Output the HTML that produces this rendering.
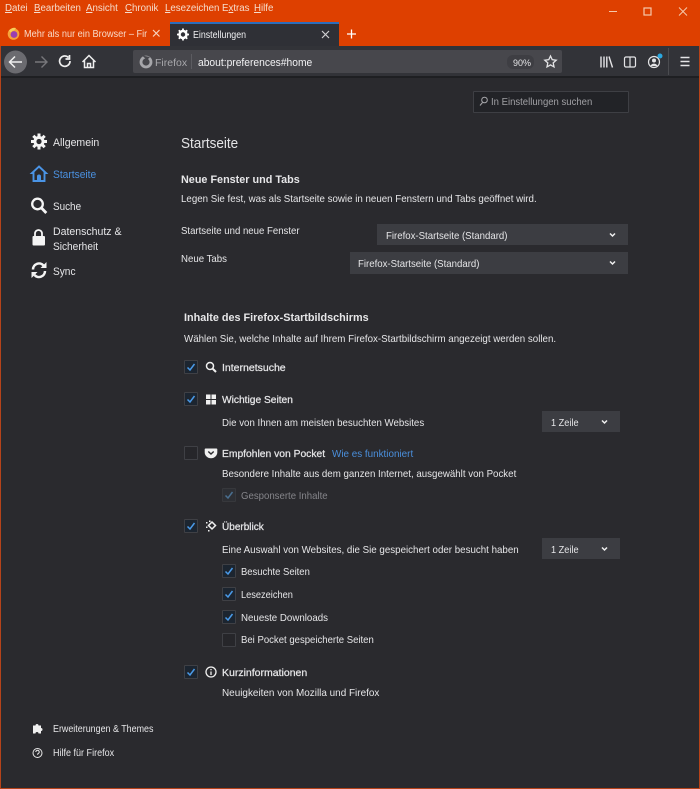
<!DOCTYPE html>
<html lang="de"><head><meta charset="utf-8"><title>Einstellungen</title>
<style>
html,body{margin:0;padding:0;width:700px;height:789px;overflow:hidden;background:#2a2a2e}
body{position:relative;font-family:"Liberation Sans",sans-serif;font-size:10.5px;color:#e6e6e8}
.t{position:absolute;white-space:nowrap;line-height:14px;transform-origin:0 0}
.b{font-weight:bold}
.m{-webkit-text-stroke:.25px #e6e6e8}
.box{position:absolute;background:#4a4a4f}
.cb{position:absolute;width:12px;height:12px;background:#1c2530;border:1px solid #3f4045;border-radius:1px}
.cb svg{position:absolute;left:0;top:0}
svg{position:absolute;overflow:visible}
u{text-decoration:underline}
.mn{top:2px;color:#f6dccb;font-size:9.7px}
</style></head><body>
<!-- title / tab bars -->
<div class="box" style="left:0;top:0;width:700px;height:46px;background:#de4000"></div>
<div class="t mn" style="left:5px"><u>D</u>atei</div>
<div class="t mn" style="left:34px"><u>B</u>earbeiten</div>
<div class="t mn" style="left:86px"><u>A</u>nsicht</div>
<div class="t mn" style="left:125px"><u>C</u>hronik</div>
<div class="t mn" style="left:165px"><u>L</u>esezeichen</div>
<div class="t mn" style="left:222px">E<u>x</u>tras</div>
<div class="t mn" style="left:254px"><u>H</u>ilfe</div>
<svg style="left:0;top:0" width="700" height="46" fill="none" stroke="#f5c9ac" stroke-width="1">
<path d="M609 11.500h8"/><rect x="644" y="8" width="7" height="7" stroke-width="1.200"/><path d="M679 7.500l8 8m0-8l-8 8"/>
<path d="M347 34h9M351.500 29.500v9" stroke="#fff" stroke-width="1.300"/>
<path d="M153 30l6.500 6.500m0-6.500l-6.500 6.500" stroke="#f7d4bf" stroke-width="1.200"/>
<circle cx="13.500" cy="34" r="5.800" fill="#f7a23a" stroke="none"/>
<circle cx="14" cy="34.500" r="3.400" fill="#9a3fb0" stroke="none"/>
<path d="M9 31a5.800 5.800 0 0 1 7-3l-2 2.500a3.500 3.500 0 0 0-3 2z" fill="#f5d05a" stroke="none"/>
</svg>
<div class="t" style="left:24px;top:28px;width:134px;overflow:hidden;color:#f8d9c7;font-size:10px;transform:scaleX(.92)">Mehr als nur ein Browser – Firefox</div>
<!-- active tab -->
<div class="box" style="left:170px;top:22px;width:169px;height:24px;background:#2f3036;border-top:2px solid #2b6dbb;box-sizing:border-box"></div>
<div class="t" style="left:193px;top:29px;color:#f0f0f2;font-size:10px;transform:scaleX(.883)">Einstellungen</div>
<svg style="left:0;top:0" width="700" height="46">
<path d="M322 31l7 7m0-7l-7 7" stroke="#cfcfd2" stroke-width="1.200" fill="none"/>
<g transform="translate(183 34.500)"><circle r="3.600" fill="none" stroke="#fff" stroke-width="2.200"/><path d="M0-6v12M-6 0h12M-4.200-4.200l8.400 8.400M4.200-4.200l-8.400 8.400" stroke="#fff" stroke-width="1.800"/><circle r="2.200" fill="#2f3036"/></g>
</svg>
<!-- toolbar -->
<div class="box" style="left:0;top:46px;width:700px;height:31px;background:#323338"></div>
<div class="box" style="left:0;top:76px;width:700px;height:2px;background:#1e1f22"></div>
<div class="box" style="left:133px;top:50px;width:429px;height:23px;background:#47474c;border-radius:2px"></div>
<div class="box" style="left:191px;top:54px;width:1px;height:15px;background:#5c5c61"></div>
<div class="box" style="left:507px;top:55px;width:27px;height:14px;background:#3e3e43;border-radius:6px"></div>
<div class="box" style="left:668px;top:48px;width:1px;height:27px;background:#4b4c50"></div>
<div class="t" style="left:155px;top:56px;color:#a8a8ac;font-size:10.5px">Firefox</div>
<div class="t" style="left:198px;top:56px;color:#f2f2f4;font-size:11px;transform:scaleX(.934)">about:preferences#home</div>
<div class="t" style="left:513px;top:56px;color:#e4e4e6;font-size:9px">90%</div>
<svg style="left:0;top:0" width="700" height="80" fill="none" stroke="#e4e4e6" stroke-width="1.300">
<circle cx="15.500" cy="62" r="11.500" fill="#6b6b70" stroke="none"/>
<path d="M22 62H10M15 56.500L9.500 62l5.500 5.500" stroke="#f0f0f0" stroke-width="1.500"/>
<path d="M47 62H35M41.500 56.500L47 62l-5.500 5.500" stroke="#77777b" stroke-width="1.400"/>
<path d="M70 61a5.200 5.200 0 1 1-1.500-3.500M69.500 55v4h-4" stroke="#eee" stroke-width="1.700"/>
<path d="M82.500 62L89 55.500l6.500 6.500M84.500 60.500v7h9v-7M87.500 67.500v-4h3v4" stroke="#eee" stroke-width="1.500"/>
<circle cx="146" cy="62" r="5" stroke="#a6a6aa" stroke-width="2.800"/>
<path d="M142 55.500l8 1.500-3 3z" fill="#47474c" stroke="none"/>
<path d="M550.500 56l1.700 3.700 4 .5-3 2.700.8 4-3.500-2-3.500 2 .8-4-3-2.700 4-.5z" stroke-width="1.300"/>
<path d="M601 56.500v11M604 56.500v11M606.800 56.500v11M609 56.500l3.500 11" stroke-width="1.400"/>
<rect x="624.500" y="57" width="11" height="10" rx="1.500" stroke-width="1.200"/><path d="M630 57v10" stroke-width="1.200"/>
<circle cx="654" cy="62" r="5.500" stroke-width="1.200"/><circle cx="654" cy="60.500" r="2" fill="#e4e4e6" stroke="none"/><path d="M650.500 66a3.800 3.800 0 0 1 7 0z" fill="#e4e4e6" stroke="none"/>
<circle cx="660" cy="56" r="2.500" fill="#2aa8e0" stroke="none"/>
<path d="M680.500 57.500h9M680.500 61.500h9M680.500 65.500h9" stroke-width="1.400"/>
</svg>
<!-- search -->
<div class="box" style="left:473px;top:91px;width:154px;height:20px;background:#222327;border:1px solid #3e3f44;border-radius:1px"></div>
<div class="t" style="left:491px;top:96px;color:#a0a0a4;font-size:10.3px;transform:scaleX(.926)">In Einstellungen suchen</div>
<svg style="left:0;top:0" width="700" height="120" fill="none" stroke="#a8a8ac" stroke-width="1"><circle cx="484.500" cy="100" r="2.800"/><path d="M482.500 102.500l-2.500 3"/></svg>
<!-- left nav -->
<div class="t" style="left:53px;top:136px;font-size:11px;transform:scaleX(.958)">Allgemein</div>
<div class="t" style="left:53px;top:168px;font-size:11px;color:#4a90df;transform:scaleX(.93)">Startseite</div>
<div class="t" style="left:53px;top:200px;font-size:11px;transform:scaleX(.9)">Suche</div>
<div class="t" style="left:53px;top:225px;font-size:11px;transform:scaleX(.958)">Datenschutz &amp;</div>
<div class="t" style="left:53px;top:240px;font-size:11px;transform:scaleX(.92)">Sicherheit</div>
<div class="t" style="left:53px;top:265px;font-size:11px;transform:scaleX(.92)">Sync</div>
<div class="t" style="left:53px;top:723px;font-size:9.8px;transform:scaleX(.91)">Erweiterungen &amp; Themes</div>
<div class="t" style="left:53px;top:747px;font-size:9.8px;transform:scaleX(.92)">Hilfe für Firefox</div>
<svg style="left:0;top:0" width="180" height="789">
<g transform="translate(39 141.500)"><path d="M0-8v16M-8 0h16M-5.700-5.700l11.400 11.400M5.700-5.700l-11.400 11.400" stroke="#f4f4f4" stroke-width="3"/><circle r="5.500" fill="#f4f4f4"/><circle r="2.600" fill="#2a2a2e"/></g>
<path d="M39 166.500l7 6.500h-1.500v8h-11v-8H32z" fill="none" stroke="#4a94e6" stroke-width="1.900"/><path d="M37 181v-4.500a2 2 0 0 1 4 0v4.500z" fill="#4a94e6"/>
<circle cx="37.500" cy="204" r="5.300" fill="none" stroke="#f4f4f4" stroke-width="2.300"/><path d="M41.500 208l4.800 5" stroke="#f4f4f4" stroke-width="2.800"/>
<path d="M35 236v-2.500a3.500 3.500 0 0 1 7 0v2.500" fill="none" stroke="#f4f4f4" stroke-width="1.800"/><rect x="32.500" y="236" width="12.500" height="9.500" rx="1" fill="#f4f4f4"/>
<path d="M33 269.500a6 6 0 0 1 10.500-4M45 271a6 6 0 0 1-10.500 4" fill="none" stroke="#f4f4f4" stroke-width="2.500"/><path d="M46.500 262v6h-6zM31.500 278v-6h6z" fill="#f4f4f4"/>
<path d="M33 725.500h2.500a1.500 1.500 0 1 1 3 0H41v2.500a1.500 1.500 0 1 1 0 3V733.500h-2.500a1.500 1.500 0 1 0-3 0H33z" fill="#f0f0f0"/>
<circle cx="37.500" cy="753" r="4.500" fill="none" stroke="#e8e8e8"/>
<path d="M35.800 752a1.700 1.700 0 1 1 2.500 1.500c-.6.300-.8.600-.8 1.200" fill="none" stroke="#e8e8e8"/>
</svg>
<!-- main -->
<div class="t" style="left:181px;top:136px;font-size:14.5px;color:#e4e4e6;line-height:16px;transform:scaleX(.934)">Startseite</div>
<div class="t b" style="left:181px;top:173px;font-size:11px;transform:scaleX(.983)">Neue Fenster und Tabs</div>
<div class="t" style="left:181px;top:192px;transform:scaleX(.927)">Legen Sie fest, was als Startseite sowie in neuen Fenstern und Tabs geöffnet wird.</div>
<div class="t" style="left:181px;top:224px;transform:scaleX(.915)">Startseite und neue Fenster</div>
<div class="t" style="left:181px;top:252px;transform:scaleX(.92)">Neue Tabs</div>
<div class="box" style="left:377px;top:224px;width:251px;height:21px;background:#3c3d42"></div>
<div class="box" style="left:350px;top:252px;width:278px;height:22px;background:#3c3d42"></div>
<div class="t" style="left:386px;top:229px;transform:scaleX(.917)">Firefox-Startseite (Standard)</div>
<div class="t" style="left:358px;top:257px;transform:scaleX(.917)">Firefox-Startseite (Standard)</div>
<div class="t b" style="left:184px;top:311px;font-size:11px;transform:scaleX(.984)">Inhalte des Firefox-Startbildschirms</div>
<div class="t" style="left:184px;top:332px;transform:scaleX(.928)">Wählen Sie, welche Inhalte auf Ihrem Firefox-Startbildschirm angezeigt werden sollen.</div>

<div class="t m" style="left:222px;top:361px">Internetsuche</div>
<div class="t m" style="left:222px;top:393px;transform:scaleX(.972)">Wichtige Seiten</div>
<div class="t" style="left:222px;top:416px;transform:scaleX(.922)">Die von Ihnen am meisten besuchten Websites</div>
<div class="t m" style="left:222px;top:447px;transform:scaleX(.981)">Empfohlen von Pocket</div>
<div class="t" style="left:332px;top:447px;color:#4a8fdc;transform:scaleX(.94)">Wie es funktioniert</div>
<div class="t" style="left:222px;top:467px;transform:scaleX(.925)">Besondere Inhalte aus dem ganzen Internet, ausgewählt von Pocket</div>
<div class="t" style="left:241px;top:489px;color:#85858a;transform:scaleX(.916)">Gesponserte Inhalte</div>
<div class="t m" style="left:222px;top:520px;transform:scaleX(.955)">Überblick</div>
<div class="t" style="left:222px;top:543px;transform:scaleX(.928)">Eine Auswahl von Websites, die Sie gespeichert oder besucht haben</div>
<div class="t" style="left:241px;top:565px;transform:scaleX(.9)">Besuchte Seiten</div>
<div class="t" style="left:241px;top:588px;transform:scaleX(.88)">Lesezeichen</div>
<div class="t" style="left:241px;top:611px;transform:scaleX(.926)">Neueste Downloads</div>
<div class="t" style="left:241px;top:633px;transform:scaleX(.91)">Bei Pocket gespeicherte Seiten</div>
<div class="t m" style="left:222px;top:666px">Kurzinformationen</div>
<div class="t" style="left:222px;top:686px;transform:scaleX(.946)">Neuigkeiten von Mozilla und Firefox</div>

<div class="box" style="left:542px;top:411px;width:78px;height:21px;background:#3c3d42"></div>
<div class="t" style="left:551px;top:416px;transform:scaleX(.875)">1 Zeile</div>
<div class="box" style="left:542px;top:538px;width:78px;height:21px;background:#3c3d42"></div>
<div class="t" style="left:551px;top:543px;transform:scaleX(.875)">1 Zeile</div>

<div class="cb" style="left:184px;top:360px"><svg width="12" height="12"><path d="M2.500 6.500l2.500 2.500 4.500-6" fill="none" stroke="#4a9ae8" stroke-width="1.500"/></svg></div>
<div class="cb" style="left:184px;top:392px"><svg width="12" height="12"><path d="M2.500 6.500l2.500 2.500 4.500-6" fill="none" stroke="#4a9ae8" stroke-width="1.500"/></svg></div>
<div class="cb" style="left:184px;top:446px;background:#26262a"></div>
<div class="cb" style="left:222px;top:488px;background:#2d2f34;border-color:#37383c"><svg width="12" height="12"><path d="M2.500 6.500l2.500 2.500 4.500-6" fill="none" stroke="#4a6f90" stroke-width="1.500"/></svg></div>
<div class="cb" style="left:184px;top:519px"><svg width="12" height="12"><path d="M2.500 6.500l2.500 2.500 4.500-6" fill="none" stroke="#4a9ae8" stroke-width="1.500"/></svg></div>
<div class="cb" style="left:222px;top:564px"><svg width="12" height="12"><path d="M2.500 6.500l2.500 2.500 4.500-6" fill="none" stroke="#4a9ae8" stroke-width="1.500"/></svg></div>
<div class="cb" style="left:222px;top:587px"><svg width="12" height="12"><path d="M2.500 6.500l2.500 2.500 4.500-6" fill="none" stroke="#4a9ae8" stroke-width="1.500"/></svg></div>
<div class="cb" style="left:222px;top:610px"><svg width="12" height="12"><path d="M2.500 6.500l2.500 2.500 4.500-6" fill="none" stroke="#4a9ae8" stroke-width="1.500"/></svg></div>
<div class="cb" style="left:222px;top:633px;background:#26262a"></div>
<div class="cb" style="left:184px;top:665px"><svg width="12" height="12"><path d="M2.500 6.500l2.500 2.500 4.500-6" fill="none" stroke="#4a9ae8" stroke-width="1.500"/></svg></div>

<svg style="left:0;top:0" width="700" height="789" fill="none" stroke="#f0f0f0">
<!-- select chevrons -->
<path d="M610 233.500l2.500 2.500 2.500-2.500M610 261.500l2.500 2.500 2.500-2.500M602 420.500l2.500 2.500 2.500-2.500M602 547.500l2.500 2.500 2.500-2.500" stroke-width="1.500"/>
<!-- search -->
<circle cx="210" cy="366" r="3.500" stroke-width="1.500"/><path d="M212.500 368.500l3.500 3.500" stroke-width="2"/>
<!-- grid -->
<path d="M206 394.500h4.500v4.500H206zM211.500 394.500h4.500v4.500h-4.500zM206 400h4.500v4.500H206zM211.500 400h4.500v4.500h-4.500z" fill="#f0f0f0" stroke="none"/>
<!-- pocket -->
<path d="M205.500 448.500h11a.8.800 0 0 1 .8.800v3a6.300 6 0 0 1-12.600 0v-3a.8.800 0 0 1 .8-.8z" fill="#f0f0f0" stroke="none"/>
<path d="M208.300 451.500l2.700 2.500 2.700-2.500" stroke="#2a2a2e" stroke-width="1.400"/>
<!-- highlights -->
<path d="M212 522l3.500 3.500-3.500 3.500-3.500-3.500z" stroke-width="1.500"/><path d="M206 522h1.500v1.500H206zM206 526.500h1.500V528H206zM208 530h1.500v1.500H208zM209 520.500h1.500V522H209z" fill="#f0f0f0" stroke="none"/>
<!-- info -->
<circle cx="211" cy="672" r="5" stroke-width="1.300"/><path d="M211 671.500v3.500M211 669v1.300" stroke-width="1.300"/>
</svg>
<!-- window border -->
<div class="box" style="left:0;top:46px;width:1px;height:743px;background:#b5431a"></div>
<div class="box" style="left:699px;top:46px;width:1px;height:743px;background:#b5431a"></div>
<div class="box" style="left:0;top:788px;width:700px;height:1px;background:#b5431a"></div>
</body></html>
